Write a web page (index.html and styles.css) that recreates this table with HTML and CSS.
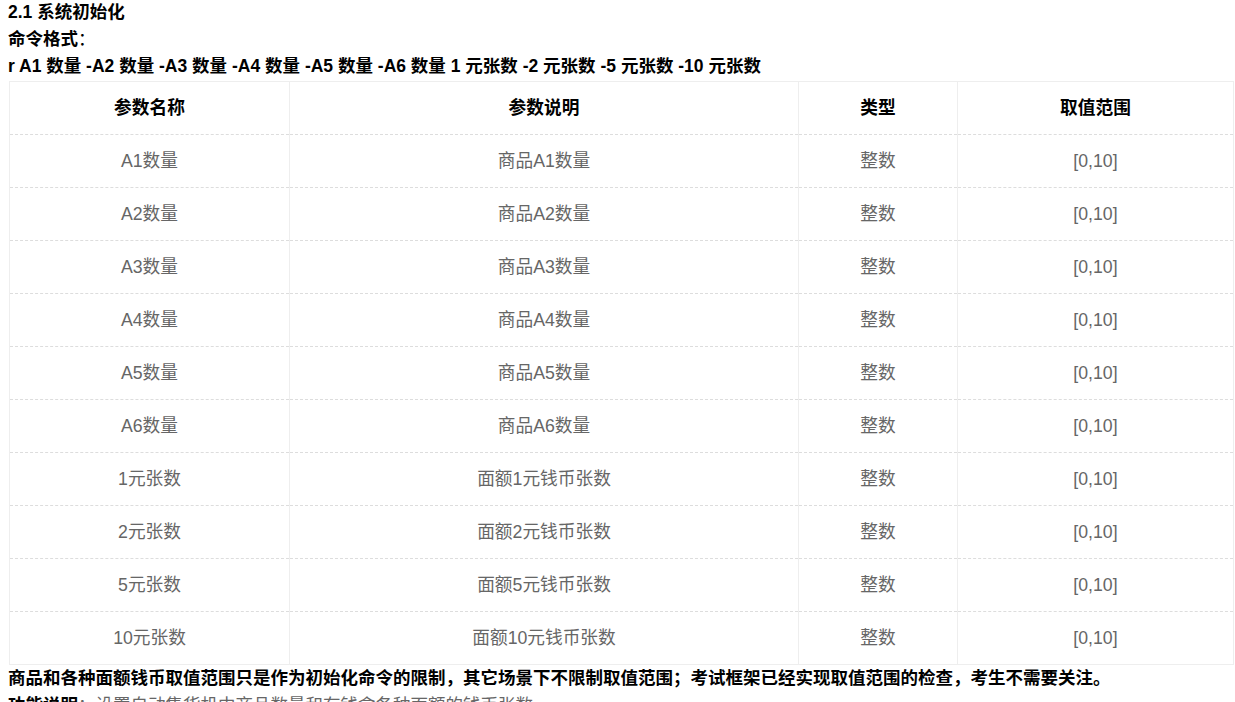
FILE: index.html
```html
<!DOCTYPE html>
<html lang="zh">
<head>
<meta charset="utf-8">
<title>2.1 系统初始化</title>
<link rel="stylesheet" href="styles.css">
</head>
<body>
<div class="doc">
  <div class="line first"><strong>2.1 系统初始化</strong></div>
  <div class="line"><strong>命令格式</strong>：</div>
  <div class="line"><strong>r A1 数量 -A2 数量 -A3 数量 -A4 数量 -A5 数量 -A6 数量 1 元张数 -2 元张数 -5 元张数 -10 元张数</strong></div>
  <table class="params">
    <colgroup>
      <col class="c1"><col class="c2"><col class="c3"><col class="c4">
    </colgroup>
    <thead>
      <tr><th>参数名称</th><th>参数说明</th><th>类型</th><th>取值范围</th></tr>
    </thead>
    <tbody>
      <tr><td>A1数量</td><td>商品A1数量</td><td>整数</td><td>[0,10]</td></tr>
      <tr><td>A2数量</td><td>商品A2数量</td><td>整数</td><td>[0,10]</td></tr>
      <tr><td>A3数量</td><td>商品A3数量</td><td>整数</td><td>[0,10]</td></tr>
      <tr><td>A4数量</td><td>商品A4数量</td><td>整数</td><td>[0,10]</td></tr>
      <tr><td>A5数量</td><td>商品A5数量</td><td>整数</td><td>[0,10]</td></tr>
      <tr><td>A6数量</td><td>商品A6数量</td><td>整数</td><td>[0,10]</td></tr>
      <tr><td>1元张数</td><td>面额1元钱币张数</td><td>整数</td><td>[0,10]</td></tr>
      <tr><td>2元张数</td><td>面额2元钱币张数</td><td>整数</td><td>[0,10]</td></tr>
      <tr><td>5元张数</td><td>面额5元钱币张数</td><td>整数</td><td>[0,10]</td></tr>
      <tr><td>10元张数</td><td>面额10元钱币张数</td><td>整数</td><td>[0,10]</td></tr>
    </tbody>
  </table>
  <div class="line"><strong>商品和各种面额钱币取值范围只是作为初始化命令的限制，其它场景下不限制取值范围；考试框架已经实现取值范围的检查，考生不需要关注。</strong></div>
  <div class="line"><strong>功能说明</strong><span class="muted">：设置自动售货机中商品数量和存钱盒各种面额的钱币张数。</span></div>
</div>
</body>
</html>
```

FILE: styles.css
```css
html, body {
  margin: 0;
  padding: 0;
  background: #ffffff;
}

body {
  font-family: "Liberation Sans", "Noto Sans CJK SC", sans-serif;
  font-size: 17.5px;
  color: #000000;
}

.doc {
  padding: 0 8px;
}

.line {
  line-height: 27px;
  height: 27px;
  white-space: nowrap;
}

.line.first {
  line-height: 25px;
  height: 25px;
  margin-bottom: 1px;
}

.line strong {
  font-weight: bold;
}

.muted {
  color: #666666;
}

.params {
  border-collapse: collapse;
  table-layout: fixed;
  width: 1224px;
  margin: 1px 0 0 1px;
  border: 1px solid #eeeeee;
}

.params col.c1 { width: 280px; }
.params col.c2 { width: 509px; }
.params col.c3 { width: 159px; }
.params col.c4 { width: 276px; }

.params th,
.params td {
  height: 52px;
  padding: 0 8px;
  text-align: center;
  vertical-align: middle;
  border-left: 1px solid #eeeeee;
  border-right: 1px solid #eeeeee;
  border-bottom: 1px dashed #dddddd;
  font-size: 17.7px;
  line-height: 20px;
}

.params th {
  font-weight: bold;
  color: #000000;
}

.params td {
  color: #666666;
}

.params tbody tr:last-child td {
  border-bottom: 1px solid #eeeeee;
}
```
